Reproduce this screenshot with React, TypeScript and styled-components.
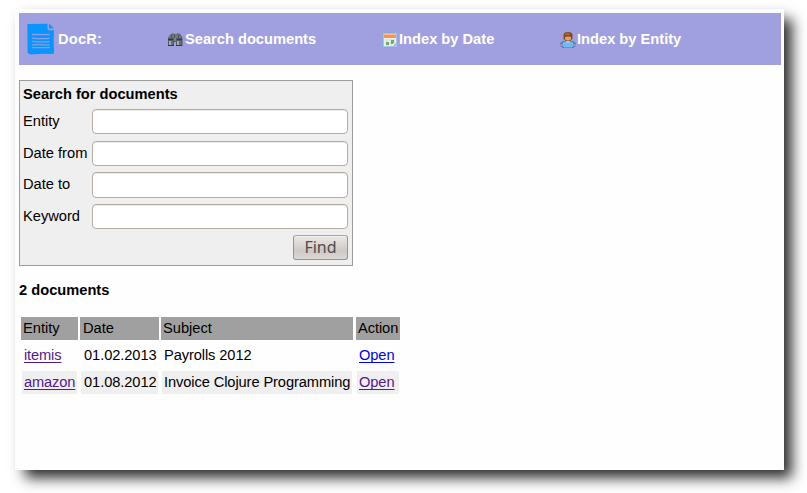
import React from 'react';
import styled, { createGlobalStyle } from 'styled-components';

const GlobalStyle = createGlobalStyle`
  * { box-sizing: border-box; }
  body {
    margin: 0;
    background: #fff;
    color: #000;
    font: 14.67px/17px "Liberation Sans", Arial, sans-serif;
    overflow: hidden;
  }
`;

const Page = styled.div`
  height: 493px;
  padding: 9px 23px 23px 15px;
`;

const Sheet = styled.main`
  height: 461px;
  padding: 4px 3px 0 4px;
  background: #fefefe;
  box-shadow: 9px 9px 13px -1px rgba(0, 0, 0, 0.82), 0 0 8px rgba(0, 0, 0, 0.03);
`;

const NavBar = styled.nav`
  display: flex;
  align-items: center;
  height: 52px;
  padding-left: 8px;
  background: #a09fdf;
  color: #fff;
  font-weight: bold;
`;

const NavItem = styled.div<{ $width: number }>`
  display: flex;
  align-items: center;
  flex: none;
  width: ${(p) => p.$width}px;
  white-space: nowrap;
`;

const NavLabel = styled.span<{ $gap?: number; $spacing?: number }>`
  margin-left: ${(p) => p.$gap ?? 1}px;
  letter-spacing: ${(p) => p.$spacing ?? 0}px;
`;

const SmallIcon = styled.svg`
  width: 16px;
  height: 16px;
  flex: none;
  margin-top: 2px;
`;

const DocIcon = styled.svg`
  width: 28px;
  height: 32px;
  flex: none;
`;

const SearchForm = styled.form`
  width: 334px;
  height: 186px;
  margin-top: 15px;
  padding: 5px 4px 5px 3px;
  border: 1px solid #9c9c9c;
  background: #efefef;
`;

const FormTitle = styled.h2`
  margin: 0 0 6px;
  font-size: inherit;
  line-height: 17px;
`;

const Field = styled.label`
  display: grid;
  grid-template-columns: 69px 256px;
  height: 31.67px;
  align-items: start;
  line-height: 25px;
`;

const TextInput = styled.input`
  width: 256px;
  height: 25.3px;
  border: 1px solid #b6aca0;
  border-radius: 4px;
  background: #fff;
  box-shadow: inset 0 1px #eeeae6;
  outline: none;
`;

const FormActions = styled.div`
  display: flex;
  justify-content: flex-end;
  margin-top: -1px;
`;

const FindButton = styled.button`
  width: 55px;
  height: 25px;
  padding: 0 0 1px;
  border: 1px solid #979592;
  border-top-color: #aaa7a4;
  border-radius: 3px;
  background: linear-gradient(#eae7e5, #d7d2cf 45%, #cec9c6 65%, #dcd8d5);
  box-shadow: inset 0 1px #f5f3f2;
  color: #4c4c4c;
  font: 16px/20px "Noto Sans", "Open Sans", sans-serif;
`;

const ResultTitle = styled.h2`
  margin: 15px 0 0;
  font-size: inherit;
  line-height: 19px;
`;

const Results = styled.div`
  display: grid;
  width: 381px;
  margin: 17px 0 0 2px;
`;

const ResultRow = styled.div`
  display: grid;
  grid-template-columns: 57px 79px 192px 44px;
  column-gap: 2px;
  height: 27px;
  white-space: nowrap;

  & > :last-child { margin-left: 1px; margin-right: -1px; }
`;

const HeadCell = styled.div`
  height: 23px;
  padding-left: 2px;
  background: #a0a0a0;
  line-height: 23px;

  &:nth-child(2) { padding-left: 3px; }
  &:last-child { letter-spacing: -0.08px; }
`;

const CellBox = styled.div`
  padding: 0 1px;
`;

const CellFill = styled.div<{ $shaded: boolean; $inset?: number; $spacing?: number }>`
  height: 23px;
  padding-left: ${(p) => p.$inset ?? 2}px;
  background: ${(p) => (p.$shaded ? '#efefef' : 'transparent')};
  line-height: 23px;
  letter-spacing: ${(p) => p.$spacing ?? -0.1}px;
`;

const DocLink = styled.a<{ $visited?: boolean }>`
  color: ${(p) => (p.$visited ? '#551a8b' : '#0000ee')};
  text-decoration: underline;
  text-decoration-thickness: 1px;
  text-underline-offset: 2px;
  text-decoration-skip-ink: none;
`;

const fields = ['Entity', 'Date from', 'Date to', 'Keyword'];
const columns = ['Entity', 'Date', 'Subject', 'Action'];
const documents = [
  { entity: 'itemis', date: '01.02.2013', subject: 'Payrolls 2012', opened: false },
  { entity: 'amazon', date: '01.08.2012', subject: 'Invoice Clojure Programming', opened: true },
];

const DocumentGlyph = () => (
  <DocIcon viewBox="0 0 28 32">
    <path d="M1.5 1Q11 .6 20.5.7V6l1 1.3H27l-.3 9 .3 12.7q0 2-1.5 2Q14 30.6 4 31.4 .4 31 .6 29L.3 2Q.3 1 1.5 1Z" fill="#0a95fd" />
    <path d="M22 .6 26.8 5.6h-4.3L22 5Z" fill="#0a95fd" />
    <path d="M5 11.5q9 0 17.5.2M5 15.1q8 1 17.5.3M5 18.3q8 .9 17.5.4M5 21.8q8-.5 17.5.4M5 24.6q9-.1 17.5 0" fill="none" stroke="#8c9ee6" strokeWidth="1.3" />
  </DocIcon>
);

const BinocularsGlyph = () => (
  <SmallIcon viewBox="0 0 16 16">
    <path d="M1 14V6l2-3 2-1.5h2l1.5 1 1.5-1h2l2 1.5 1.5 3v8H9v-4H7v4Z" fill="#555b63" />
    <path d="M2 5q1-3 5-3l1 1 1-1q4 0 5 3v1H2Z" fill="#70777e" />
    <path d="M4 3h1v3H4Zm3 0h1v3H7Zm4 0h1v3h-1Z" fill="#4b5158" />
    <path d="M1 7h5v1H1Zm9 0h5v1h-5Z" fill="#33373c" />
    <path d="M2 9h2v4H2Zm8 0h2v4h-2Z" fill="#a5abb1" />
    <path d="M4 9h2v4H4Zm8 0h2v4h-2Z" fill="#696f79" />
    <path d="M7 6h2v3H7Z" fill="#7c818b" />
    <path d="M1 13h6v1H1Zm8 0h6v1H9Z" fill="#34373d" />
  </SmallIcon>
);

const CalendarGlyph = () => (
  <SmallIcon viewBox="0 0 16 16">
    <rect x=".5" y=".5" width="15" height="15" rx="1" fill="#a9c4eb" stroke="#83a9df" />
    <path d="M2 2h12v12H2Z" fill="#edf0ed" />
    <path d="M2 2h12v4H2Z" fill="#fa924f" />
    <path d="M2 2h12v1H2Z" fill="#ffb681" />
    <path d="M3 8h10M3 11h10M5 7v7M9 7v7M12 7v7" stroke="#d3ddde" />
    <path d="M9 8h3v3H9Zm-5 2h3v3H4Zm5 1h2v1H9Z" fill="#76aa66" />
    <path d="m11 14 3-3v3Z" fill="#9cbbe2" />
  </SmallIcon>
);

const PersonGlyph = () => (
  <SmallIcon viewBox="0 0 16 16">
    <path d="M.5 11 3 9h10l2.5 2v3L13 16H3L.5 14Z" fill="#4179c4" />
    <path d="M3 10.5 4.5 9.5h7l1.5 1 1 3-2 2H4l-2-2Z" fill="#73b8f7" />
    <path d="M.5 12h2v2h-2Zm13 0h2v2h-2Z" fill="#b99078" />
    <path d="M3.5 3q0-3 4.5-3t4.5 3v3.5L10.5 9h-5l-2-2.5Z" fill="#824b1e" />
    <path d="M5 5q3-1 6 0v2L9.8 8.6H6.2L5 7Z" fill="#dea26f" />
    <path d="M5 2q3-2 5 0L9 3H5Z" fill="#ac6a31" />
    <path d="M6 9.5h4L8 11Z" fill="#dff0ff" />
  </SmallIcon>
);

export default function App() {
  return (
    <>
      <GlobalStyle />
      <Page>
        <Sheet>
          <NavBar>
            <NavItem $width={140}><DocumentGlyph /><NavLabel $gap={3} $spacing={0.2}>DocR:</NavLabel></NavItem>
            <NavItem $width={215}><BinocularsGlyph /><NavLabel $gap={2}>Search documents</NavLabel></NavItem>
            <NavItem $width={178}><CalendarGlyph /><NavLabel>Index by Date</NavLabel></NavItem>
            <NavItem $width={140}><PersonGlyph /><NavLabel>Index by Entity</NavLabel></NavItem>
          </NavBar>
          <SearchForm onSubmit={(e) => e.preventDefault()}>
            <FormTitle>Search for documents</FormTitle>
            {fields.map((name) => (
              <Field key={name}>{name}<TextInput type="text" /></Field>
            ))}
            <FormActions><FindButton type="submit">Find</FindButton></FormActions>
          </SearchForm>
          <ResultTitle>2 documents</ResultTitle>
          <Results>
            <ResultRow>{columns.map((name) => <HeadCell key={name}>{name}</HeadCell>)}</ResultRow>
            {documents.map((doc) => (
              <ResultRow key={doc.entity}>
                <CellBox><CellFill $shaded={doc.opened} $spacing={-0.15}><DocLink href="#" $visited>{doc.entity}</DocLink></CellFill></CellBox>
                <CellBox><CellFill $shaded={doc.opened} $inset={3} $spacing={-0.08}>{doc.date}</CellFill></CellBox>
                <CellBox><CellFill $shaded={doc.opened}>{doc.subject}</CellFill></CellBox>
                <CellBox><CellFill $shaded={doc.opened}><DocLink href="#" $visited={doc.opened}>Open</DocLink></CellFill></CellBox>
              </ResultRow>
            ))}
          </Results>
        </Sheet>
      </Page>
    </>
  );
}
